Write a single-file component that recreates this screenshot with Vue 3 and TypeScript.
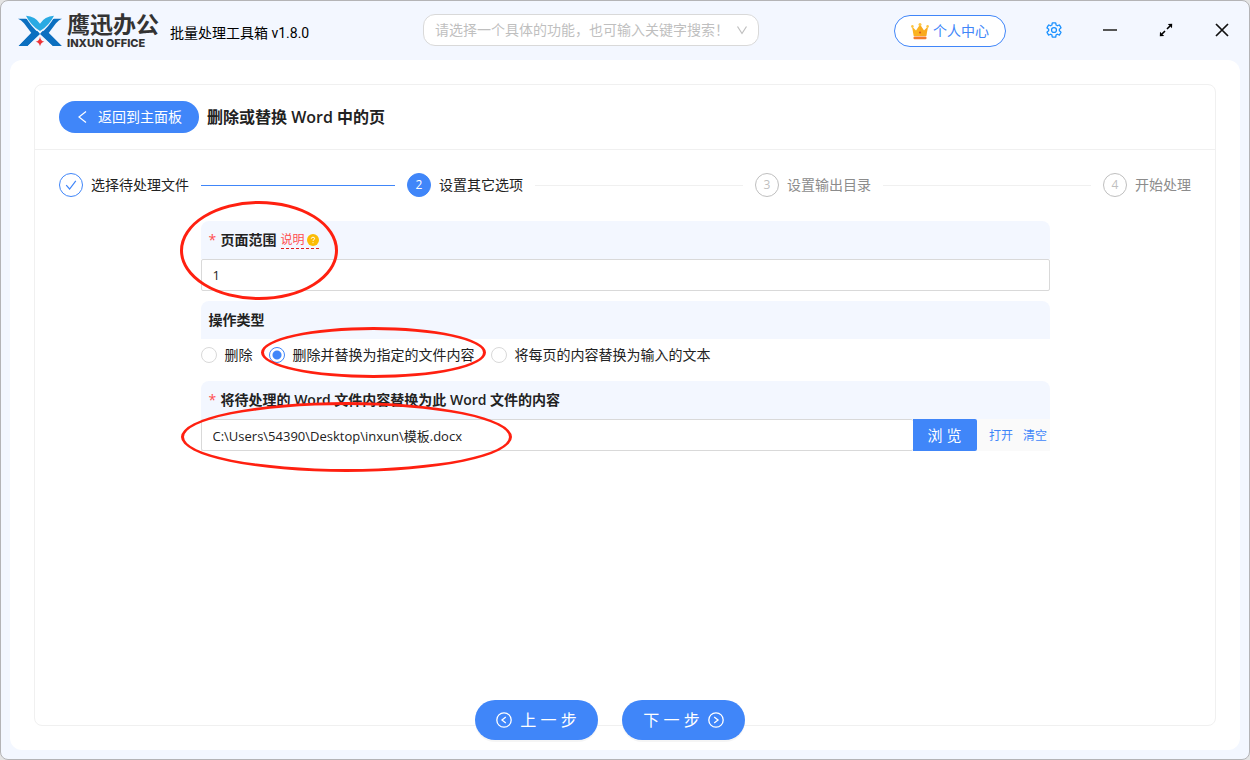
<script setup lang="ts">
import { ref } from 'vue'

type StepState = 'done' | 'active' | 'wait'
interface Step {
  title: string
  state: StepState
}
interface Choice {
  value: string
  label: string
  marked?: boolean
}

const steps: Step[] = [
  { title: '选择待处理文件', state: 'done' },
  { title: '设置其它选项', state: 'active' },
  { title: '设置输出目录', state: 'wait' },
  { title: '开始处理', state: 'wait' },
]

const choices: Choice[] = [
  { value: 'delete', label: '删除' },
  { value: 'file', label: '删除并替换为指定的文件内容', marked: true },
  { value: 'text', label: '将每页的内容替换为输入的文本' },
]

const keyword = ref('')
const pageRange = ref('1')
const operation = ref('file')
const filePath = ref('C:\\Users\\54390\\Desktop\\inxun\\模板.docx')
</script>

<template>
  <div class="window">
    <header class="topbar">
      <div class="brand">
        <svg class="brand-mark" viewBox="0 0 132 94" aria-hidden="true">
          <path fill="#0b6fc0" d="M0 10H24Q34 12 42 22L66 52L28 92H2L40 53L18 24Q10 14 0 10Z" />
          <path fill="#0b6fc0" d="M132 10H108Q98 12 90 22L66 52L105 92H131L92 53L114 24Q122 14 132 10Z" />
          <path fill="#f3f7ff" d="M20 0Q38 34 66 56Q94 34 112 0Z" />
          <path fill="#29aae3" d="M24 1Q52 2 66 25Q80 2 108 1Q94 30 66 47Q38 30 24 1Z" />
          <path fill="#f3f7ff" d="M66 54L90 78L84 94H48L42 78Z" />
          <path fill="#0b6fc0" d="M40 53L58 47L66 56L28 92H2ZM92 53L74 47L66 56L105 92H131Z" />
          <path fill="#ed3338" d="M66 64Q68 77 79 79Q68 81 66 93Q64 81 53 79Q64 77 66 64Z" />
        </svg>
        <div class="brand-name">
          <strong class="brand-cn">鹰迅办公</strong>
          <span class="brand-en">INXUN OFFICE</span>
        </div>
        <span class="version">批量处理工具箱 v1.8.0</span>
      </div>

      <div class="search">
        <input
          v-model="keyword"
          class="search-input"
          type="text"
          role="combobox"
          aria-label="搜索功能"
          aria-expanded="false"
          placeholder="请选择一个具体的功能，也可输入关键字搜索！"
        />
        <svg class="search-arrow" viewBox="0 0 12 12" aria-hidden="true">
          <path d="M1.5 2.5L6 9.5L10.5 2.5" fill="none" stroke="#bfbfbf" stroke-width="1.2" />
        </svg>
      </div>

      <div class="actions">
        <button class="user" type="button">
          <svg class="crown" viewBox="0 0 18 18" aria-hidden="true">
            <path fill="#fbb321" d="M1 4.5L5 8.5L9 2.5L13 8.5L17 4.5L15.3 14H2.7Z" />
            <path fill="#f59a1b" d="M9 2.5L13 8.5L17 4.5L15.3 14H9Z" opacity=".35" />
            <rect x="2.5" y="14.5" width="13" height="2.8" rx="1" fill="#f47a2c" />
            <circle cx="1.4" cy="4.4" r="1.3" fill="#fcc544" />
            <circle cx="9" cy="2.6" r="1.5" fill="#fcc544" />
            <circle cx="16.6" cy="4.4" r="1.3" fill="#fcc544" />
            <circle cx="9" cy="10.6" r="1" fill="#d9541e" />
          </svg>
          <span>个人中心</span>
        </button>
        <button class="tool" type="button" aria-label="设置">
          <svg viewBox="0 0 24 24" width="18" height="18" fill="none" stroke="#1890ff" stroke-width="1.7" aria-hidden="true">
            <path d="M19.14 12.94c.04-.3.06-.61.06-.94 0-.32-.02-.64-.07-.94l2.03-1.58c.18-.14.23-.41.12-.61l-1.92-3.32c-.12-.22-.37-.29-.59-.22l-2.39.96c-.5-.38-1.03-.7-1.62-.94l-.36-2.54c-.04-.24-.24-.41-.48-.41h-3.84c-.24 0-.43.17-.47.41l-.36 2.54c-.59.24-1.13.57-1.62.94l-2.39-.96c-.22-.08-.47 0-.59.22L2.74 8.87c-.12.21-.08.47.12.61l2.03 1.58c-.05.3-.09.63-.09.94s.02.64.07.94l-2.03 1.58c-.18.14-.23.41-.12.61l1.92 3.32c.12.22.37.29.59.22l2.39-.96c.5.38 1.03.7 1.62.94l.36 2.54c.05.24.24.41.48.41h3.84c.24 0 .44-.17.47-.41l.36-2.54c.59-.24 1.13-.56 1.62-.94l2.39.96c.22.08.47 0 .59-.22l1.92-3.32c.12-.22.07-.47-.12-.61l-2.01-1.58z" />
            <circle cx="12" cy="12" r="3.3" />
          </svg>
        </button>
        <button class="tool" type="button" aria-label="最小化">
          <svg viewBox="0 0 16 16" width="16" height="16" aria-hidden="true">
            <path d="M1 8H15" stroke="#555" stroke-width="2" />
          </svg>
        </button>
        <button class="tool" type="button" aria-label="最大化">
          <svg viewBox="0 0 16 16" width="16" height="16" aria-hidden="true">
            <path d="M4 12L7 9M9 7L12 4" stroke="#000" stroke-width="1.6" />
            <path d="M9.8 2L14.2 1.8L14 6.2ZM2 9.8L1.8 14.2L6.2 14Z" fill="#000" />
          </svg>
        </button>
        <button class="tool" type="button" aria-label="关闭">
          <svg viewBox="0 0 16 16" width="16" height="16" aria-hidden="true">
            <path d="M2 2L14 14M14 2L2 14" stroke="#111" stroke-width="1.7" />
          </svg>
        </button>
      </div>
    </header>

    <main class="content">
      <section class="card">
        <div class="card-head">
          <button class="back" type="button">
            <svg viewBox="0 0 14 14" width="14" height="14" aria-hidden="true">
              <path d="M10 1.5L3 7L10 12.5" fill="none" stroke="#fff" stroke-width="1.2" />
            </svg>
            <span>返回到主面板</span>
          </button>
          <h1 class="title">删除或替换 Word 中的页</h1>
        </div>

        <div class="card-body">
          <ol class="steps">
            <li v-for="(step, i) in steps" :key="step.title" class="step" :class="step.state">
              <span class="step-icon">
                <svg v-if="step.state === 'done'" viewBox="0 0 12 12" width="12" height="12" aria-hidden="true">
                  <path d="M1.2 6.2L4.6 10L10.8 1.8" fill="none" stroke="#4086f9" stroke-width="1.2" />
                </svg>
                <template v-else>{{ i + 1 }}</template>
              </span>
              <span class="step-title">{{ step.title }}</span>
            </li>
          </ol>

          <form class="form" @submit.prevent>
            <div class="field">
              <div class="field-head">
                <span class="required">*</span>
                <label for="page-range">页面范围</label>
                <a class="hint" href="#">
                  说明
                  <svg viewBox="0 0 12 12" width="12" height="12" aria-hidden="true">
                    <circle cx="6" cy="6" r="6" fill="#fbbc05" />
                    <path d="M4.3 4.7Q4.4 3.2 6 3.2Q7.7 3.3 7.6 4.7Q7.5 5.5 6.6 5.9Q6 6.2 6 7M6 8.2V9.2" fill="none" stroke="#fff" />
                  </svg>
                </a>
              </div>
              <input id="page-range" v-model="pageRange" class="text" type="text" />
              <span class="ring ring-range" aria-hidden="true"></span>
            </div>

            <div class="field" role="radiogroup" aria-labelledby="operation-label">
              <div class="field-head"><span id="operation-label">操作类型</span></div>
              <div class="choices">
                <label v-for="choice in choices" :key="choice.value" class="choice">
                  <input v-model="operation" type="radio" name="operation" :value="choice.value" />
                  <span>{{ choice.label }}</span>
                  <span v-if="choice.marked" class="ring ring-choice" aria-hidden="true"></span>
                </label>
              </div>
            </div>

            <div class="field">
              <div class="field-head">
                <span class="required">*</span>
                <label for="file-path">将待处理的 Word 文件内容替换为此 Word 文件的内容</label>
              </div>
              <div class="file-row">
                <input id="file-path" v-model="filePath" class="text" type="text" />
                <button class="browse" type="button">浏 览</button>
                <span class="file-links">
                  <a href="#">打开</a>
                  <a href="#">清空</a>
                </span>
              </div>
              <span class="ring ring-file" aria-hidden="true"></span>
            </div>
          </form>
        </div>
      </section>

      <footer class="pager">
        <button class="page-btn" type="button">
          <svg viewBox="0 0 16 16" width="16" height="16" fill="none" stroke="#fff" stroke-width="1.3" aria-hidden="true">
            <circle cx="8" cy="8" r="7.2" />
            <path d="M9.8 5L6 8L9.8 11" />
          </svg>
          <span>上 一 步</span>
        </button>
        <button class="page-btn" type="button">
          <span>下 一 步</span>
          <svg viewBox="0 0 16 16" width="16" height="16" fill="none" stroke="#fff" stroke-width="1.3" aria-hidden="true">
            <circle cx="8" cy="8" r="7.2" />
            <path d="M6.2 5L10 8L6.2 11" />
          </svg>
        </button>
      </footer>
    </main>
  </div>
</template>

<style>
body {
  background: #e4e4e4;
}
</style>

<style scoped>
.window,
.window * {
  box-sizing: border-box;
}
.window {
  display: flex;
  flex-direction: column;
  min-height: 100vh;
  padding: 0 9px 9px;
  border: 1px solid #b4b4b6;
  border-radius: 8px;
  background: #f3f7ff;
  color: #222;
  font: 14px/20px "Open Sans", "Noto Sans CJK SC", sans-serif;
}
button,
input {
  font: inherit;
  color: inherit;
}
button {
  display: inline-flex;
  align-items: center;
  justify-content: center;
  padding: 0;
  border: 0;
  background: none;
  cursor: pointer;
  white-space: nowrap;
}
a {
  text-decoration: none;
}
svg {
  flex: none;
}

.topbar {
  display: flex;
  align-items: center;
  height: 59px;
}
.brand {
  display: flex;
  align-items: center;
  flex: none;
  width: 413px;
  padding-left: 8px;
}
.brand-mark {
  width: 44px;
  height: 32px;
}
.brand-name {
  display: flex;
  flex-direction: column;
  gap: 2px;
  width: 92px;
  margin-left: 5px;
  color: #333;
  white-space: nowrap;
}
.brand-cn {
  font-size: 23px;
  line-height: 22px;
  font-weight: 700;
}
.brand-en {
  font-family: Inter, sans-serif;
  font-size: 11px;
  line-height: 12px;
  font-weight: 800;
}
.version {
  margin: 4px 0 0 11px;
  color: #000;
  font-family: Roboto, "Noto Sans CJK SC", sans-serif;
}
.search {
  display: flex;
  align-items: center;
  flex: 0 1 336px;
  height: 32px;
  margin-bottom: 2px;
  padding: 0 10px 0 11px;
  border: 1px solid #d9d9d9;
  border-radius: 12px;
  background: #fff;
}
.search-input {
  flex: 1;
  min-width: 0;
  padding: 0;
  border: 0;
  outline: 0;
  background: none;
}
.search-input::placeholder {
  color: #bfbfbf;
  opacity: 1;
}
.search-arrow {
  width: 12px;
  height: 12px;
}
.actions {
  display: flex;
  align-items: center;
  margin-left: auto;
}
.user {
  gap: 4px;
  width: 112px;
  height: 32px;
  margin-right: 20px;
  border: 1px solid #4086f9;
  border-radius: 16px;
  background: #fff;
  color: #4086f9;
}
.crown {
  width: 18px;
  height: 18px;
}
.tool {
  width: 56px;
  height: 32px;
  margin-bottom: 2px;
}
.tool:last-child {
  width: 46px;
  padding-right: 10px;
  justify-content: flex-end;
}

.content {
  display: flex;
  flex: 1;
  flex-direction: column;
  padding: 24px 24px 10px;
  border-radius: 12px;
  background: #fff;
}
.card {
  flex: 1;
  border: 1px solid #f0f0f0;
  border-radius: 8px;
}
.card-head {
  display: flex;
  align-items: center;
  gap: 8px;
  padding: 16px 24px;
  border-bottom: 1px solid #f0f0f0;
}
.back {
  gap: 8px;
  width: 140px;
  height: 32px;
  border-radius: 16px;
  background: #4086f9;
  color: #fff;
}
.title {
  margin: 0;
  font-size: 16px;
  line-height: 24px;
  font-weight: 600;
}
.card-body {
  padding: 23px 24px;
}

.steps {
  display: flex;
  margin: 0;
  padding: 0;
  list-style: none;
}
.step {
  display: flex;
  align-items: center;
  flex: 1;
  padding-right: 12px;
  white-space: nowrap;
}
.step:last-child {
  flex: none;
  padding-right: 0;
}
.step:not(:last-child)::after {
  content: "";
  flex: 1;
  height: 1px;
  margin-left: 12px;
  background: #f0f0f0;
}
.step.done::after {
  background: #4086f9;
}
.step-icon {
  display: flex;
  align-items: center;
  justify-content: center;
  width: 24px;
  height: 24px;
  margin-right: 8px;
  border: 1px solid #bfbfbf;
  border-radius: 50%;
  color: #bfbfbf;
  font-size: 12px;
}
.done .step-icon {
  border-color: #4086f9;
}
.active .step-icon {
  border-color: #4086f9;
  background: #4086f9;
  color: #fff;
}
.wait .step-title {
  color: #8c8c8c;
}

.form {
  display: flex;
  flex-direction: column;
  gap: 10px;
  width: 75%;
  margin: 24px auto 0;
}
.field {
  position: relative;
}
.field-head {
  display: flex;
  align-items: center;
  gap: 4px;
  height: 38px;
  padding-left: 8px;
  border-radius: 8px 8px 0 0;
  background: #f3f7ff;
  font-weight: 600;
}
.required {
  width: 8px;
  color: #ff4d4f;
  font-weight: 400;
}
.hint {
  display: flex;
  align-items: center;
  gap: 2px;
  border-bottom: 1px dashed #e02020;
  color: #ff4d4f;
  font-size: 12px;
  line-height: 16px;
  font-weight: 400;
}
.text {
  display: block;
  width: 100%;
  min-width: 0;
  height: 32px;
  padding: 0 11px;
  border: 1px solid #d9d9d9;
  border-radius: 2px;
  outline: 0;
  background: #fff;
  font-size: 13px;
}
.choices {
  display: flex;
  height: 32px;
}
.choice {
  position: relative;
  display: flex;
  align-items: center;
  margin-right: 8px;
  white-space: nowrap;
}
.choice > span:not(.ring) {
  padding: 0 8px;
}
.choice input {
  width: 16px;
  height: 16px;
  margin: 0;
  border: 1px solid #d9d9d9;
  border-radius: 50%;
  appearance: none;
  background: #fff;
}
.choice input:checked {
  border-color: #4086f9;
  background: radial-gradient(circle, #4086f9 4px, #fff 5px);
}
.file-row {
  display: flex;
}
.file-row .text {
  flex: 1;
  border-right: 0;
}
.browse {
  width: 64px;
  height: 32px;
  border-radius: 0 2px 2px 0;
  background: #4086f9;
  color: #fff;
  font-size: 15px;
}
.file-links {
  display: flex;
  align-items: center;
  justify-content: center;
  gap: 10px;
  width: 73px;
  padding: 2px 0 0 10px;
  background: #fafafa;
  font-size: 12px;
}
.file-links a {
  color: #4086f9;
}

/* Highlight ellipses laid over the form */
.ring {
  position: absolute;
  z-index: 1;
  border: 3px solid #ff2010;
  border-radius: 50%;
  pointer-events: none;
}
.ring-range {
  top: -20px;
  left: -21px;
  width: 158px;
  height: 99px;
}
.ring-choice {
  top: -12px;
  left: -8px;
  width: 225px;
  height: 51px;
}
.ring-file {
  top: 21px;
  left: -20px;
  width: 331px;
  height: 70px;
}

.pager {
  position: relative;
  display: flex;
  justify-content: center;
  gap: 24px;
  margin-top: -26px;
  padding-right: 30px;
}
.page-btn {
  gap: 8px;
  width: 123px;
  height: 40px;
  border-radius: 20px;
  background: #4086f9;
  box-shadow: 0 2px 0 rgba(0, 0, 0, 0.04);
  color: #fff;
  font-size: 16px;
}
</style>
